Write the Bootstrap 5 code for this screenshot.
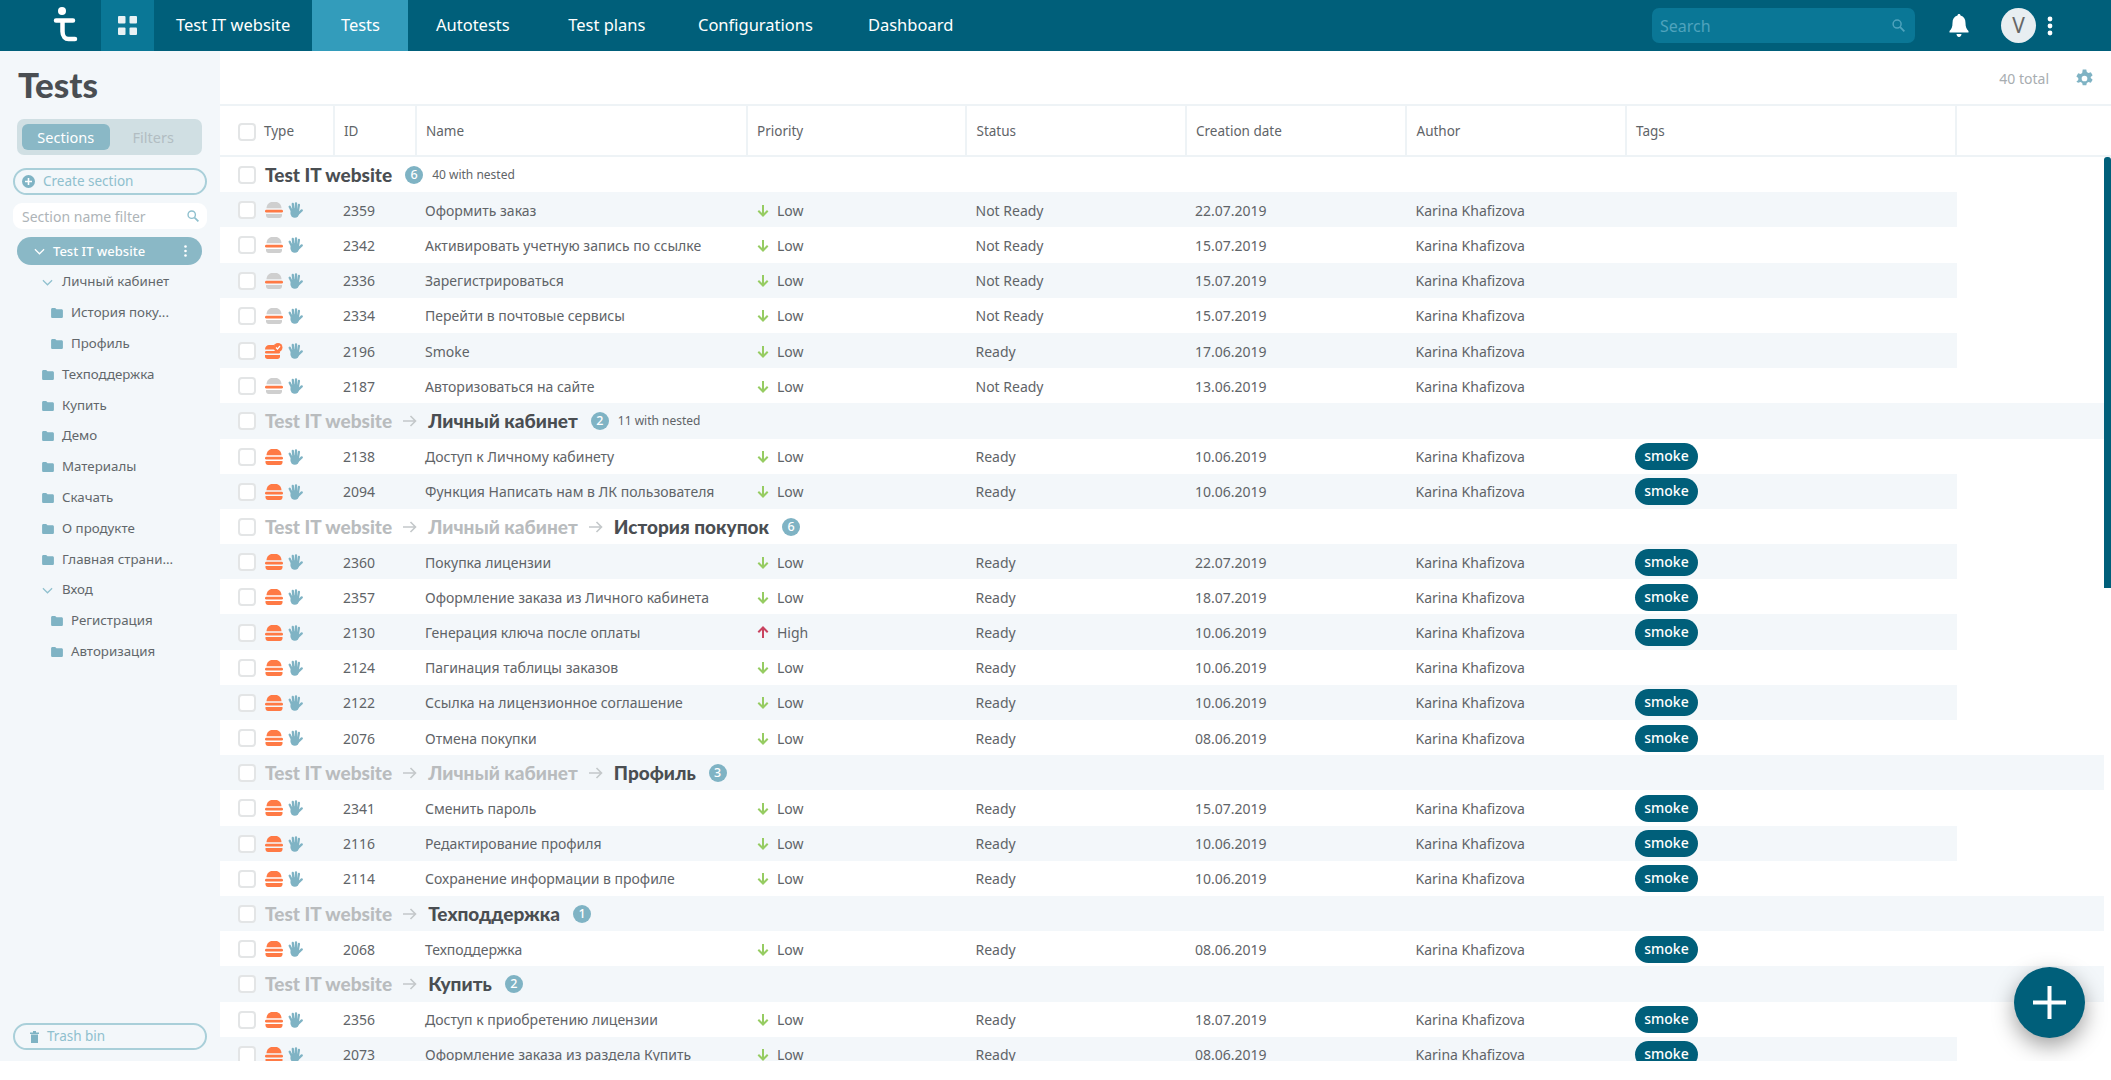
<!DOCTYPE html>
<html lang="en"><head><meta charset="utf-8"><title>Tests</title>
<link href="https://cdn.jsdelivr.net/npm/bootstrap@5.3.0/dist/css/bootstrap.min.css" rel="stylesheet">
<style>
body{background:#fff;font-family:"Noto Sans","Liberation Sans",sans-serif;color:#5f6468;font-size:14px;overflow:hidden}
.shell{height:1061px;overflow:hidden;position:relative}
.topbar{height:51px;background:#005f7a;flex:none;padding:0}
.logo-box{width:101px;height:51px}
.apps-box{width:53px;height:51px;background:#0a7796}
.top-link{color:#fff;font-size:16.5px;padding:0 27.5px;height:51px;display:flex;align-items:center;text-decoration:none}
.top-link.first-link{padding-left:22px;padding-right:22px}
.top-link.on{background:#339cbb;padding:0 28.5px}
.top-link.tp-link{padding-left:31px;padding-right:25px}
.top-search{width:263px;height:35px;background:#0a7796;border-radius:7px;margin-right:34px;padding:0 10px 0 8px;color:#4fa3bd;font-size:16px}
.ava{width:35px;height:35px;border-radius:50%;background:#e8eef1;color:#666;font-size:21px;margin-left:32px}
.dots-v{margin:0 58px 0 11px}
.side{width:220px;flex:none;background:#f3f7fa;padding:0 13px}
.side-title{font-family:Lato,sans-serif;font-weight:900;font-size:35px;line-height:40px;color:#4a4e52;margin:13px 0 0 5px}
.seg{margin:15px 5px 0 4px;height:36px;background:#d0dfe3;border-radius:7px;padding:5px;font-size:14.5px;font-weight:400;color:#b2bdc2}
.seg>div{width:88px;text-align:center;line-height:26px}
.seg .on{background:#8ab8c6;color:#fff;border-radius:6px}
.pill-btn{height:27px;border:2px solid #a9cfd9;border-radius:14px;color:#8fc0ce;font-size:13.5px;padding-left:7px}
.create-btn{margin-top:13px}
.side-input{height:26px;background:#fff;border-radius:9px;margin:8px 0 8px;padding:0 8px 0 9px;color:#aeb4b8;font-size:14px}
.tree-on{height:28px;margin:0 5px 0 4px;background:#8ab8c6;border-radius:14px;color:#fff;font-weight:500;font-size:13px;padding:0 15px 0 17px;line-height:28px}
.tree-row{height:30.8px;white-space:nowrap;color:#62676b;font-size:13.3px}
.lvl1{padding-left:29px}.lvl2{padding-left:38px}.lvl0{padding-left:29px}
.tree-box{margin-top:2px}
.bin{margin-bottom:11px;padding-left:15px;margin-top:auto}
.main-pane{min-width:0}
.tool-row{height:53px;flex:none;font-size:14px;color:#a8adb1;padding:2px 17px 0 0}
.gear{margin-left:26px}
.wrap-row{min-height:0}
.rail{width:7px;flex:none}
.rail-gap{height:53px;border-top:2px solid #eef3f6;border-bottom:2px solid #eef3f6}
.rail-thumb{height:431px;background:#005f7a;border-radius:3px 3px 0 0}
.grid-table{width:1884px;table-layout:fixed;margin:0;--bs-table-bg:transparent;color:#5f6468;font-size:14px;flex:none;border-collapse:separate;border-spacing:0}
.grid-table>:not(caption)>*>*{padding:1px 0 0 8.5px;vertical-align:middle;box-shadow:none;border:0;color:inherit;white-space:nowrap;background:transparent}
.grid-table thead th{height:53px;font-weight:400;border-top:2px solid #eef3f6;border-bottom:2px solid #eef3f6;border-right:2px solid #eef3f6;color:#5f6468;padding:2px 0 0 9.5px;font-size:13.5px}
.grid-table thead th:last-child{border-right:0}
.grid-table>tbody>tr{height:35.2px}
.grid-table>tbody>tr>td{height:35.2px}
.grid-table>:not(caption)>*>.first-cell{padding-left:18px}
.grid-table>tbody>tr.band>td:not(.void){background:#f3f7fa}
.tick{width:18px;height:18px;border:2px solid #e3e5e6;border-radius:4px;background:#fff;flex:none;display:block}
.ic-burger{width:18px;height:16px;margin-left:9px;flex:none}
.ic-hand{width:15px;height:16px;margin-left:5px;flex:none}
.arr{width:12px;height:13px;margin:0 8px 0 1px;flex:none}
.tag-pill{display:inline-block;height:27px;line-height:26px;width:63px;text-align:center;border-radius:14px;background:#005f7a;color:#fff;font-weight:500;font-size:14px;vertical-align:middle}
.group-title{font-family:Lato,sans-serif;font-weight:900;font-size:19px;color:#4a4e52;margin-left:9px}
.group-title.dim{color:#b9bcbe}
.g-arrow{width:14px;height:12px;margin:0 11px;flex:none}
.num{width:18px;height:18px;border-radius:50%;background:#7fb3c4;color:#fff;font-size:12.5px;font-weight:500;line-height:18px;text-align:center;margin-left:13px}
.nested{font-size:12px;margin-left:9px;color:#5f6468}
.fab{position:absolute;left:2014px;top:967px;width:71px;height:71px;border-radius:50%;background:#005f7a;box-shadow:0 8px 22px rgba(0,0,0,.38)}
.defs-holder{position:absolute}
</style></head><body>
<svg width="0" height="0" class="defs-holder"><defs>
<symbol id="bgray" viewBox="0 0 18 16"><path d="M1.500 6.300C1.500 2.400 4.500 0 7 0h4c2.500 0 5.500 2.400 5.500 6.300z" fill="#cfcfcf"/><rect y="7.800" width="18" height="2.800" rx="1.400" fill="#ff7a45"/><path d="M1 12h16v1.300c0 1.600-1 2.700-2.500 2.700h-11C2 16 1 14.900 1 13.300z" fill="#cfcfcf"/></symbol>
<symbol id="bfull" viewBox="0 0 18 16"><path d="M1.500 6.300C1.500 2.400 4.500 0 7 0h4c2.500 0 5.500 2.400 5.500 6.300z" fill="#ff7a45"/><rect y="7.800" width="18" height="2.800" rx="1.400" fill="#ff7a45"/><path d="M.5 12h17v1.300c0 1.600-1 2.700-2.500 2.700H3c-1.500 0-2.500-1.100-2.500-2.700z" fill="#ff7a45"/></symbol>
<symbol id="bcheck" viewBox="0 0 18 16"><path d="M0 6.500C0 3.500 2 2 4 2h5v4.500z" fill="#ff7a45"/><rect y="8" width="15" height="2.600" rx="1.300" fill="#ff7a45"/><path d="M0 12h15v1.500c0 1.500-1 2.500-2.500 2.500h-10C1 16 0 15 0 13.500z" fill="#ff7a45"/><circle cx="13" cy="4.500" r="4.500" fill="#ff7a45"/><path d="M11 4.500l1.500 1.500 2.500-3" stroke="#fff" stroke-width="1.200" fill="none"/></symbol>
<symbol id="hand" viewBox="0 0 15 16"><g stroke="#7fb3c4" stroke-width="2.300" stroke-linecap="round" fill="none"><path d="M3.800 9 1.700 4.800M5.500 8 4.800 2M7.800 8 8 1.300M10 8.500 10.900 3M10 12l3.700-3.600"/></g><ellipse cx="6.800" cy="11" rx="4.400" ry="4.800" fill="#7fb3c4"/></symbol>
<symbol id="down" viewBox="0 0 12 13"><path d="M6 1v10.500M1.300 6.800 6 11.500l4.700-4.700" fill="none" stroke="#96cc62" stroke-width="2"/></symbol>
<symbol id="up" viewBox="0 0 12 13"><path d="M6 12V1.500M1.300 6.200 6 1.500l4.700 4.700" fill="none" stroke="#c9435f" stroke-width="2"/></symbol>
<symbol id="garr" viewBox="0 0 14 12"><path d="M0 6h12.500M7.500 1l5 5-5 5" fill="none" stroke="#c4c8ca" stroke-width="1.600"/></symbol>
<symbol id="folder" viewBox="0 0 13 11"><path d="M0 1.500C0 .7.700 0 1.500 0h3l1.500 1.500h5.500c.8 0 1.500.7 1.500 1.500v6.500c0 .8-.7 1.500-1.500 1.500h-10C.7 11 0 10.300 0 9.500z" fill="#7fb3c4"/></symbol>
<symbol id="chev" viewBox="0 0 12 7"><path d="M1 1l5 5 5-5" fill="none" stroke="currentColor" stroke-width="1.300"/></symbol>
<symbol id="lens" viewBox="0 0 14 14"><circle cx="5.500" cy="5.500" r="4.300" fill="none" stroke="currentColor" stroke-width="1.600"/><path d="M8.800 8.800l4.500 4.500" stroke="currentColor" stroke-width="2"/></symbol>
</defs></svg>
<div class="shell d-flex flex-column">
<nav class="navbar topbar flex-nowrap">
 <div class="d-flex align-items-center h-100 flex-grow-1">
  <div class="logo-box d-flex align-items-center"><svg width="101" height="51" viewBox="0 0 101 51"><circle cx="62" cy="11" r="4" fill="#fff"/><path d="M56 20.500h17M62.500 20.500v11c0 5 3 7.500 6 7.500h6.500" fill="none" stroke="#fff" stroke-width="4.500" stroke-linecap="round"/></svg></div>
  <div class="apps-box d-flex align-items-center justify-content-center"><svg width="19" height="19" viewBox="0 0 19 19"><g fill="#e8f1f4"><rect width="7.500" height="7.500" rx="1"/><rect x="11.500" width="7.500" height="7.500" rx="1"/><rect y="11.500" width="7.500" height="7.500" rx="1"/><rect x="11.500" y="11.500" width="7.500" height="7.500" rx="1"/></g></svg></div>
  <a class="top-link first-link" href="#">Test IT website</a>
  <a class="top-link on" href="#">Tests</a>
  <a class="top-link" href="#">Autotests</a>
  <a class="top-link tp-link" href="#">Test plans</a>
  <a class="top-link" href="#">Configurations</a>
  <a class="top-link" href="#">Dashboard</a>
  <div class="top-search d-flex align-items-center justify-content-between ms-auto"><span>Search</span><svg width="13" height="13" style="color:#4fa3bd"><use href="#lens"/></svg></div>
  <svg width="20" height="23" viewBox="0 0 20 23"><path d="M10 0c1 0 1.500.7 1.500 1.500C15 2.500 16.500 5 16.500 9c0 4 1 6 3 8v1.500H.5V17c2-2 3-4 3-8 0-4 1.500-6.500 5-7.500C8.500.7 9 0 10 0zM7.500 20h5c0 1.500-1 3-2.500 3s-2.500-1.500-2.500-3z" fill="#fff"/></svg>
  <div class="ava d-flex align-items-center justify-content-center">V</div>
  <svg width="6" height="20" viewBox="0 0 6 20" class="dots-v"><g fill="#fff"><circle cx="3" cy="3" r="2.400"/><circle cx="3" cy="10" r="2.400"/><circle cx="3" cy="17" r="2.400"/></g></svg>
 </div>
</nav>
<div class="d-flex flex-grow-1 wrap-row">
<aside class="side d-flex flex-column">
 <div class="side-title">Tests</div>
 <div class="seg d-flex"><div class="on">Sections</div><div>Filters</div></div>
 <div class="pill-btn create-btn d-flex align-items-center"><svg width="13" height="13" viewBox="0 0 13 13" class="me-2"><circle cx="6.500" cy="6.500" r="6.500" fill="#7fb3c4"/><path d="M6.500 3v7M3 6.500h7" stroke="#fff" stroke-width="1.600"/></svg>Create section</div>
 <div class="side-input d-flex align-items-center justify-content-between"><span>Section name filter</span><svg width="12" height="12" style="color:#8fc0ce"><use href="#lens"/></svg></div>
 <div class="tree-on d-flex align-items-center"><svg width="11" height="7" class="me-2" style="color:#fff"><use href="#chev"/></svg><span class="flex-grow-1">Test IT website</span><svg width="3" height="12" viewBox="0 0 3 12"><g fill="#fff"><circle cx="1.500" cy="1.500" r="1.300"/><circle cx="1.500" cy="6" r="1.300"/><circle cx="1.500" cy="10.500" r="1.300"/></g></svg></div>
 <div class="tree-box">
  <div class="tree-row lvl0 d-flex align-items-center"><svg width="11" height="7" style="color:#8fc0ce;margin-right:9px"><use href="#chev"/></svg>Личный кабинет</div>
  <div class="tree-row lvl2 d-flex align-items-center"><svg width="12" height="10" class="me-2"><use href="#folder"/></svg>История поку...</div>
  <div class="tree-row lvl2 d-flex align-items-center"><svg width="12" height="10" class="me-2"><use href="#folder"/></svg>Профиль</div>
  <div class="tree-row lvl1 d-flex align-items-center"><svg width="12" height="10" class="me-2"><use href="#folder"/></svg>Техподдержка</div>
  <div class="tree-row lvl1 d-flex align-items-center"><svg width="12" height="10" class="me-2"><use href="#folder"/></svg>Купить</div>
  <div class="tree-row lvl1 d-flex align-items-center"><svg width="12" height="10" class="me-2"><use href="#folder"/></svg>Демо</div>
  <div class="tree-row lvl1 d-flex align-items-center"><svg width="12" height="10" class="me-2"><use href="#folder"/></svg>Материалы</div>
  <div class="tree-row lvl1 d-flex align-items-center"><svg width="12" height="10" class="me-2"><use href="#folder"/></svg>Скачать</div>
  <div class="tree-row lvl1 d-flex align-items-center"><svg width="12" height="10" class="me-2"><use href="#folder"/></svg>О продукте</div>
  <div class="tree-row lvl1 d-flex align-items-center"><svg width="12" height="10" class="me-2"><use href="#folder"/></svg>Главная страни...</div>
  <div class="tree-row lvl0 d-flex align-items-center"><svg width="11" height="7" style="color:#8fc0ce;margin-right:9px"><use href="#chev"/></svg>Вход</div>
  <div class="tree-row lvl2 d-flex align-items-center"><svg width="12" height="10" class="me-2"><use href="#folder"/></svg>Регистрация</div>
  <div class="tree-row lvl2 d-flex align-items-center"><svg width="12" height="10" class="me-2"><use href="#folder"/></svg>Авторизация</div>
 </div>
 <div class="pill-btn bin d-flex align-items-center"><svg width="9" height="12" viewBox="0 0 9 12" class="me-2"><path d="M0 1.500h9V3H0zM3 0h3v1.500H3zM1 3.500h7V12H1z" fill="#7fb3c4"/></svg>Trash bin</div>
</aside>
<main class="main-pane flex-grow-1 d-flex flex-column">
 <div class="tool-row d-flex align-items-center justify-content-end"><span>40 total</span><svg class="gear" width="19" height="19" viewBox="0 0 18 18"><path fill="#7fb3c4" fill-rule="evenodd" d="M7.300.5h3.400l.5 2.300 1.500.9 2.300-.7 1.700 2.900-1.800 1.600v1l1.800 1.600-1.700 2.900-2.300-.7-1.500.9-.5 2.300H7.300l-.5-2.300-1.500-.9-2.300.7L1.300 12l1.800-1.600v-1.800L1.300 7l1.700-2.900 2.300.7 1.500-.9zM9 6.300a2.700 2.700 0 1 0 0 5.400 2.700 2.700 0 0 0 0-5.400z"/></svg></div>
 <div class="d-flex flex-grow-1 wrap-row overflow-hidden">
 <table class="table table-borderless grid-table">
 <colgroup><col style="width:114.5px"><col style="width:82px"><col style="width:331px"><col style="width:219.5px"><col style="width:219.5px"><col style="width:220.5px"><col style="width:219.5px"><col style="width:330px"><col></colgroup>
 <thead><tr><th class="first-cell"><div class="d-flex align-items-center"><span class="tick"></span><span class="ms-2">Type</span></div></th><th>ID</th><th>Name</th><th>Priority</th><th>Status</th><th>Creation date</th><th>Author</th><th>Tags</th><th></th></tr></thead>
 <tbody>
 <tr><td colspan="9" class="first-cell"><div class="d-flex align-items-center"><span class="tick"></span><span class="group-title">Test IT website</span><span class="num">6</span><span class="nested">40 with nested</span></div></td></tr>
 <tr class="band"><td class="first-cell"><div class="d-flex align-items-center"><span class="tick"></span><svg class="ic-burger"><use href="#bgray"/></svg><svg class="ic-hand"><use href="#hand"/></svg></div></td><td>2359</td><td>Оформить заказ</td><td><div class="d-flex align-items-center"><svg class="arr"><use href="#down"/></svg>Low</div></td><td>Not Ready</td><td>22.07.2019</td><td>Karina Khafizova</td><td></td><td class="void"></td></tr>
 <tr><td class="first-cell"><div class="d-flex align-items-center"><span class="tick"></span><svg class="ic-burger"><use href="#bgray"/></svg><svg class="ic-hand"><use href="#hand"/></svg></div></td><td>2342</td><td>Активировать учетную запись по ссылке</td><td><div class="d-flex align-items-center"><svg class="arr"><use href="#down"/></svg>Low</div></td><td>Not Ready</td><td>15.07.2019</td><td>Karina Khafizova</td><td></td><td class="void"></td></tr>
 <tr class="band"><td class="first-cell"><div class="d-flex align-items-center"><span class="tick"></span><svg class="ic-burger"><use href="#bgray"/></svg><svg class="ic-hand"><use href="#hand"/></svg></div></td><td>2336</td><td>Зарегистрироваться</td><td><div class="d-flex align-items-center"><svg class="arr"><use href="#down"/></svg>Low</div></td><td>Not Ready</td><td>15.07.2019</td><td>Karina Khafizova</td><td></td><td class="void"></td></tr>
 <tr><td class="first-cell"><div class="d-flex align-items-center"><span class="tick"></span><svg class="ic-burger"><use href="#bgray"/></svg><svg class="ic-hand"><use href="#hand"/></svg></div></td><td>2334</td><td>Перейти в почтовые сервисы</td><td><div class="d-flex align-items-center"><svg class="arr"><use href="#down"/></svg>Low</div></td><td>Not Ready</td><td>15.07.2019</td><td>Karina Khafizova</td><td></td><td class="void"></td></tr>
 <tr class="band"><td class="first-cell"><div class="d-flex align-items-center"><span class="tick"></span><svg class="ic-burger"><use href="#bcheck"/></svg><svg class="ic-hand"><use href="#hand"/></svg></div></td><td>2196</td><td>Smoke</td><td><div class="d-flex align-items-center"><svg class="arr"><use href="#down"/></svg>Low</div></td><td>Ready</td><td>17.06.2019</td><td>Karina Khafizova</td><td></td><td class="void"></td></tr>
 <tr><td class="first-cell"><div class="d-flex align-items-center"><span class="tick"></span><svg class="ic-burger"><use href="#bgray"/></svg><svg class="ic-hand"><use href="#hand"/></svg></div></td><td>2187</td><td>Авторизоваться на сайте</td><td><div class="d-flex align-items-center"><svg class="arr"><use href="#down"/></svg>Low</div></td><td>Not Ready</td><td>13.06.2019</td><td>Karina Khafizova</td><td></td><td class="void"></td></tr>
 <tr class="band"><td colspan="9" class="first-cell"><div class="d-flex align-items-center"><span class="tick"></span><span class="group-title dim">Test IT website</span><svg class="g-arrow"><use href="#garr"/></svg><span class="group-title ms-0">Личный кабинет</span><span class="num">2</span><span class="nested">11 with nested</span></div></td></tr>
 <tr><td class="first-cell"><div class="d-flex align-items-center"><span class="tick"></span><svg class="ic-burger"><use href="#bfull"/></svg><svg class="ic-hand"><use href="#hand"/></svg></div></td><td>2138</td><td>Доступ к Личному кабинету</td><td><div class="d-flex align-items-center"><svg class="arr"><use href="#down"/></svg>Low</div></td><td>Ready</td><td>10.06.2019</td><td>Karina Khafizova</td><td><span class="tag-pill">smoke</span></td><td class="void"></td></tr>
 <tr class="band"><td class="first-cell"><div class="d-flex align-items-center"><span class="tick"></span><svg class="ic-burger"><use href="#bfull"/></svg><svg class="ic-hand"><use href="#hand"/></svg></div></td><td>2094</td><td>Функция Написать нам в ЛК пользователя</td><td><div class="d-flex align-items-center"><svg class="arr"><use href="#down"/></svg>Low</div></td><td>Ready</td><td>10.06.2019</td><td>Karina Khafizova</td><td><span class="tag-pill">smoke</span></td><td class="void"></td></tr>
 <tr><td colspan="9" class="first-cell"><div class="d-flex align-items-center"><span class="tick"></span><span class="group-title dim">Test IT website</span><svg class="g-arrow"><use href="#garr"/></svg><span class="group-title dim ms-0">Личный кабинет</span><svg class="g-arrow"><use href="#garr"/></svg><span class="group-title ms-0">История покупок</span><span class="num">6</span></div></td></tr>
 <tr class="band"><td class="first-cell"><div class="d-flex align-items-center"><span class="tick"></span><svg class="ic-burger"><use href="#bfull"/></svg><svg class="ic-hand"><use href="#hand"/></svg></div></td><td>2360</td><td>Покупка лицензии</td><td><div class="d-flex align-items-center"><svg class="arr"><use href="#down"/></svg>Low</div></td><td>Ready</td><td>22.07.2019</td><td>Karina Khafizova</td><td><span class="tag-pill">smoke</span></td><td class="void"></td></tr>
 <tr><td class="first-cell"><div class="d-flex align-items-center"><span class="tick"></span><svg class="ic-burger"><use href="#bfull"/></svg><svg class="ic-hand"><use href="#hand"/></svg></div></td><td>2357</td><td>Оформление заказа из Личного кабинета</td><td><div class="d-flex align-items-center"><svg class="arr"><use href="#down"/></svg>Low</div></td><td>Ready</td><td>18.07.2019</td><td>Karina Khafizova</td><td><span class="tag-pill">smoke</span></td><td class="void"></td></tr>
 <tr class="band"><td class="first-cell"><div class="d-flex align-items-center"><span class="tick"></span><svg class="ic-burger"><use href="#bfull"/></svg><svg class="ic-hand"><use href="#hand"/></svg></div></td><td>2130</td><td>Генерация ключа после оплаты</td><td><div class="d-flex align-items-center"><svg class="arr"><use href="#up"/></svg>High</div></td><td>Ready</td><td>10.06.2019</td><td>Karina Khafizova</td><td><span class="tag-pill">smoke</span></td><td class="void"></td></tr>
 <tr><td class="first-cell"><div class="d-flex align-items-center"><span class="tick"></span><svg class="ic-burger"><use href="#bfull"/></svg><svg class="ic-hand"><use href="#hand"/></svg></div></td><td>2124</td><td>Пагинация таблицы заказов</td><td><div class="d-flex align-items-center"><svg class="arr"><use href="#down"/></svg>Low</div></td><td>Ready</td><td>10.06.2019</td><td>Karina Khafizova</td><td></td><td class="void"></td></tr>
 <tr class="band"><td class="first-cell"><div class="d-flex align-items-center"><span class="tick"></span><svg class="ic-burger"><use href="#bfull"/></svg><svg class="ic-hand"><use href="#hand"/></svg></div></td><td>2122</td><td>Ссылка на лицензионное соглашение</td><td><div class="d-flex align-items-center"><svg class="arr"><use href="#down"/></svg>Low</div></td><td>Ready</td><td>10.06.2019</td><td>Karina Khafizova</td><td><span class="tag-pill">smoke</span></td><td class="void"></td></tr>
 <tr><td class="first-cell"><div class="d-flex align-items-center"><span class="tick"></span><svg class="ic-burger"><use href="#bfull"/></svg><svg class="ic-hand"><use href="#hand"/></svg></div></td><td>2076</td><td>Отмена покупки</td><td><div class="d-flex align-items-center"><svg class="arr"><use href="#down"/></svg>Low</div></td><td>Ready</td><td>08.06.2019</td><td>Karina Khafizova</td><td><span class="tag-pill">smoke</span></td><td class="void"></td></tr>
 <tr class="band"><td colspan="9" class="first-cell"><div class="d-flex align-items-center"><span class="tick"></span><span class="group-title dim">Test IT website</span><svg class="g-arrow"><use href="#garr"/></svg><span class="group-title dim ms-0">Личный кабинет</span><svg class="g-arrow"><use href="#garr"/></svg><span class="group-title ms-0">Профиль</span><span class="num">3</span></div></td></tr>
 <tr><td class="first-cell"><div class="d-flex align-items-center"><span class="tick"></span><svg class="ic-burger"><use href="#bfull"/></svg><svg class="ic-hand"><use href="#hand"/></svg></div></td><td>2341</td><td>Сменить пароль</td><td><div class="d-flex align-items-center"><svg class="arr"><use href="#down"/></svg>Low</div></td><td>Ready</td><td>15.07.2019</td><td>Karina Khafizova</td><td><span class="tag-pill">smoke</span></td><td class="void"></td></tr>
 <tr class="band"><td class="first-cell"><div class="d-flex align-items-center"><span class="tick"></span><svg class="ic-burger"><use href="#bfull"/></svg><svg class="ic-hand"><use href="#hand"/></svg></div></td><td>2116</td><td>Редактирование профиля</td><td><div class="d-flex align-items-center"><svg class="arr"><use href="#down"/></svg>Low</div></td><td>Ready</td><td>10.06.2019</td><td>Karina Khafizova</td><td><span class="tag-pill">smoke</span></td><td class="void"></td></tr>
 <tr><td class="first-cell"><div class="d-flex align-items-center"><span class="tick"></span><svg class="ic-burger"><use href="#bfull"/></svg><svg class="ic-hand"><use href="#hand"/></svg></div></td><td>2114</td><td>Сохранение информации в профиле</td><td><div class="d-flex align-items-center"><svg class="arr"><use href="#down"/></svg>Low</div></td><td>Ready</td><td>10.06.2019</td><td>Karina Khafizova</td><td><span class="tag-pill">smoke</span></td><td class="void"></td></tr>
 <tr class="band"><td colspan="9" class="first-cell"><div class="d-flex align-items-center"><span class="tick"></span><span class="group-title dim">Test IT website</span><svg class="g-arrow"><use href="#garr"/></svg><span class="group-title ms-0">Техподдержка</span><span class="num">1</span></div></td></tr>
 <tr><td class="first-cell"><div class="d-flex align-items-center"><span class="tick"></span><svg class="ic-burger"><use href="#bfull"/></svg><svg class="ic-hand"><use href="#hand"/></svg></div></td><td>2068</td><td>Техподдержка</td><td><div class="d-flex align-items-center"><svg class="arr"><use href="#down"/></svg>Low</div></td><td>Ready</td><td>08.06.2019</td><td>Karina Khafizova</td><td><span class="tag-pill">smoke</span></td><td class="void"></td></tr>
 <tr class="band"><td colspan="9" class="first-cell"><div class="d-flex align-items-center"><span class="tick"></span><span class="group-title dim">Test IT website</span><svg class="g-arrow"><use href="#garr"/></svg><span class="group-title ms-0">Купить</span><span class="num">2</span></div></td></tr>
 <tr><td class="first-cell"><div class="d-flex align-items-center"><span class="tick"></span><svg class="ic-burger"><use href="#bfull"/></svg><svg class="ic-hand"><use href="#hand"/></svg></div></td><td>2356</td><td>Доступ к приобретению лицензии</td><td><div class="d-flex align-items-center"><svg class="arr"><use href="#down"/></svg>Low</div></td><td>Ready</td><td>18.07.2019</td><td>Karina Khafizova</td><td><span class="tag-pill">smoke</span></td><td class="void"></td></tr>
 <tr class="band"><td class="first-cell"><div class="d-flex align-items-center"><span class="tick"></span><svg class="ic-burger"><use href="#bfull"/></svg><svg class="ic-hand"><use href="#hand"/></svg></div></td><td>2073</td><td>Оформление заказа из раздела Купить</td><td><div class="d-flex align-items-center"><svg class="arr"><use href="#down"/></svg>Low</div></td><td>Ready</td><td>08.06.2019</td><td>Karina Khafizova</td><td><span class="tag-pill">smoke</span></td><td class="void"></td></tr>
 </tbody></table>
 <div class="rail d-flex flex-column"><div class="rail-gap"></div><div class="rail-thumb"></div></div>
 </div>
</main>
</div>
<div class="fab d-flex align-items-center justify-content-center"><svg width="33" height="33" viewBox="0 0 33 33"><path d="M16.500 0v33M0 16.500h33" stroke="#fff" stroke-width="4"/></svg></div>
</div>
<script src="https://cdn.jsdelivr.net/npm/bootstrap@5.3.0/dist/js/bootstrap.bundle.min.js"></script>
</body></html>
